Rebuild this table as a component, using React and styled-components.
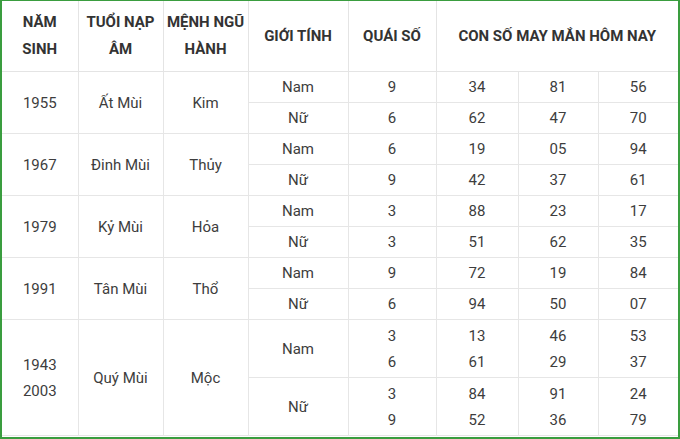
import React from "react";
import styled, { createGlobalStyle } from "styled-components";

const GlobalStyle = createGlobalStyle`
  html, body {
    margin: 0;
    padding: 0;
    background: #ffffff;
  }
  body {
    font-family: Roboto, "Noto Sans", "Liberation Sans", sans-serif;
  }
`;

const Frame = styled.div`
  width: 680px;
  height: 439px;
  box-sizing: border-box;
  border: 2px solid #3a9d3f;
  border-top-width: 1px;
  background: #fff;
  overflow: hidden;
`;

const Table = styled.table`
  width: 676px;
  border-collapse: collapse;
  table-layout: fixed;
  color: #3d3d3d;
  font-size: 15px;
`;

const Col = styled.col`
  width: ${(p) => p.$w}px;
`;

const Head = styled.th`
  height: 70px;
  padding: 0;
  font-weight: 700;
  color: #333;
  line-height: 27px;
  text-align: center;
  border: 1px solid #e4e4e4;
  border-top: none;
  &:first-child { border-left: none; }
  &:last-child { border-right: none; }
`;

const Cell = styled.td`
  height: ${(p) => (p.$tall ? 57 : 30)}px;
  padding: 0;
  text-align: center;
  line-height: 26px;
  border: 1px solid #e6e6e6;
  border-top-color: ${(p) => (p.$groupTop ? "#dedede" : "#e6e6e6")};
  &:first-child { border-left: none; }
  &:last-child { border-right: none; }
`;

const widths = [76, 85, 85, 100, 88, 82, 80, 80];

const groups = [
  {
    year: ["1955"],
    nap: "Ất Mùi",
    menh: "Kim",
    rows: [
      { g: "Nam", q: ["9"], n: [["34"], ["81"], ["56"]] },
      { g: "Nữ", q: ["6"], n: [["62"], ["47"], ["70"]] },
    ],
  },
  {
    year: ["1967"],
    nap: "Đinh Mùi",
    menh: "Thủy",
    rows: [
      { g: "Nam", q: ["6"], n: [["19"], ["05"], ["94"]] },
      { g: "Nữ", q: ["9"], n: [["42"], ["37"], ["61"]] },
    ],
  },
  {
    year: ["1979"],
    nap: "Kỷ Mùi",
    menh: "Hỏa",
    rows: [
      { g: "Nam", q: ["3"], n: [["88"], ["23"], ["17"]] },
      { g: "Nữ", q: ["3"], n: [["51"], ["62"], ["35"]] },
    ],
  },
  {
    year: ["1991"],
    nap: "Tân Mùi",
    menh: "Thổ",
    rows: [
      { g: "Nam", q: ["9"], n: [["72"], ["19"], ["84"]] },
      { g: "Nữ", q: ["6"], n: [["94"], ["50"], ["07"]] },
    ],
  },
  {
    year: ["1943", "2003"],
    nap: "Quý Mùi",
    menh: "Mộc",
    tall: true,
    rows: [
      { g: "Nam", q: ["3", "6"], n: [["13", "61"], ["46", "29"], ["53", "37"]] },
      { g: "Nữ", q: ["3", "9"], n: [["84", "52"], ["91", "36"], ["24", "79"]] },
    ],
  },
];

const Lines = ({ items }) =>
  items.map((t, i) => (
    <React.Fragment key={i}>
      {i > 0 && <br />}
      {t}
    </React.Fragment>
  ));

export default function App() {
  return (
    <>
      <GlobalStyle />
      <Frame>
        <Table>
          <colgroup>
            {widths.map((w, i) => (
              <Col key={i} $w={w} />
            ))}
          </colgroup>
          <thead>
            <tr>
              <Head>NĂM<br />SINH</Head>
              <Head>TUỔI NẠP<br />ÂM</Head>
              <Head>MỆNH NGŨ<br />HÀNH</Head>
              <Head>GIỚI TÍNH</Head>
              <Head>QUÁI SỐ</Head>
              <Head colSpan={3}>CON SỐ MAY MẮN HÔM NAY</Head>
            </tr>
          </thead>
          <tbody>
            {groups.map((grp) =>
              grp.rows.map((r, ri) => (
                <tr key={grp.nap + r.g}>
                  {ri === 0 && (
                    <>
                      <Cell rowSpan={2} $groupTop $tall={grp.tall}>
                        <Lines items={grp.year} />
                      </Cell>
                      <Cell rowSpan={2} $groupTop $tall={grp.tall}>{grp.nap}</Cell>
                      <Cell rowSpan={2} $groupTop $tall={grp.tall}>{grp.menh}</Cell>
                    </>
                  )}
                  <Cell $groupTop={ri === 0} $tall={grp.tall}>{r.g}</Cell>
                  <Cell $groupTop={ri === 0} $tall={grp.tall}>
                    <Lines items={r.q} />
                  </Cell>
                  {r.n.map((v, vi) => (
                    <Cell key={vi} $groupTop={ri === 0} $tall={grp.tall}>
                      <Lines items={v} />
                    </Cell>
                  ))}
                </tr>
              ))
            )}
          </tbody>
        </Table>
      </Frame>
    </>
  );
}
